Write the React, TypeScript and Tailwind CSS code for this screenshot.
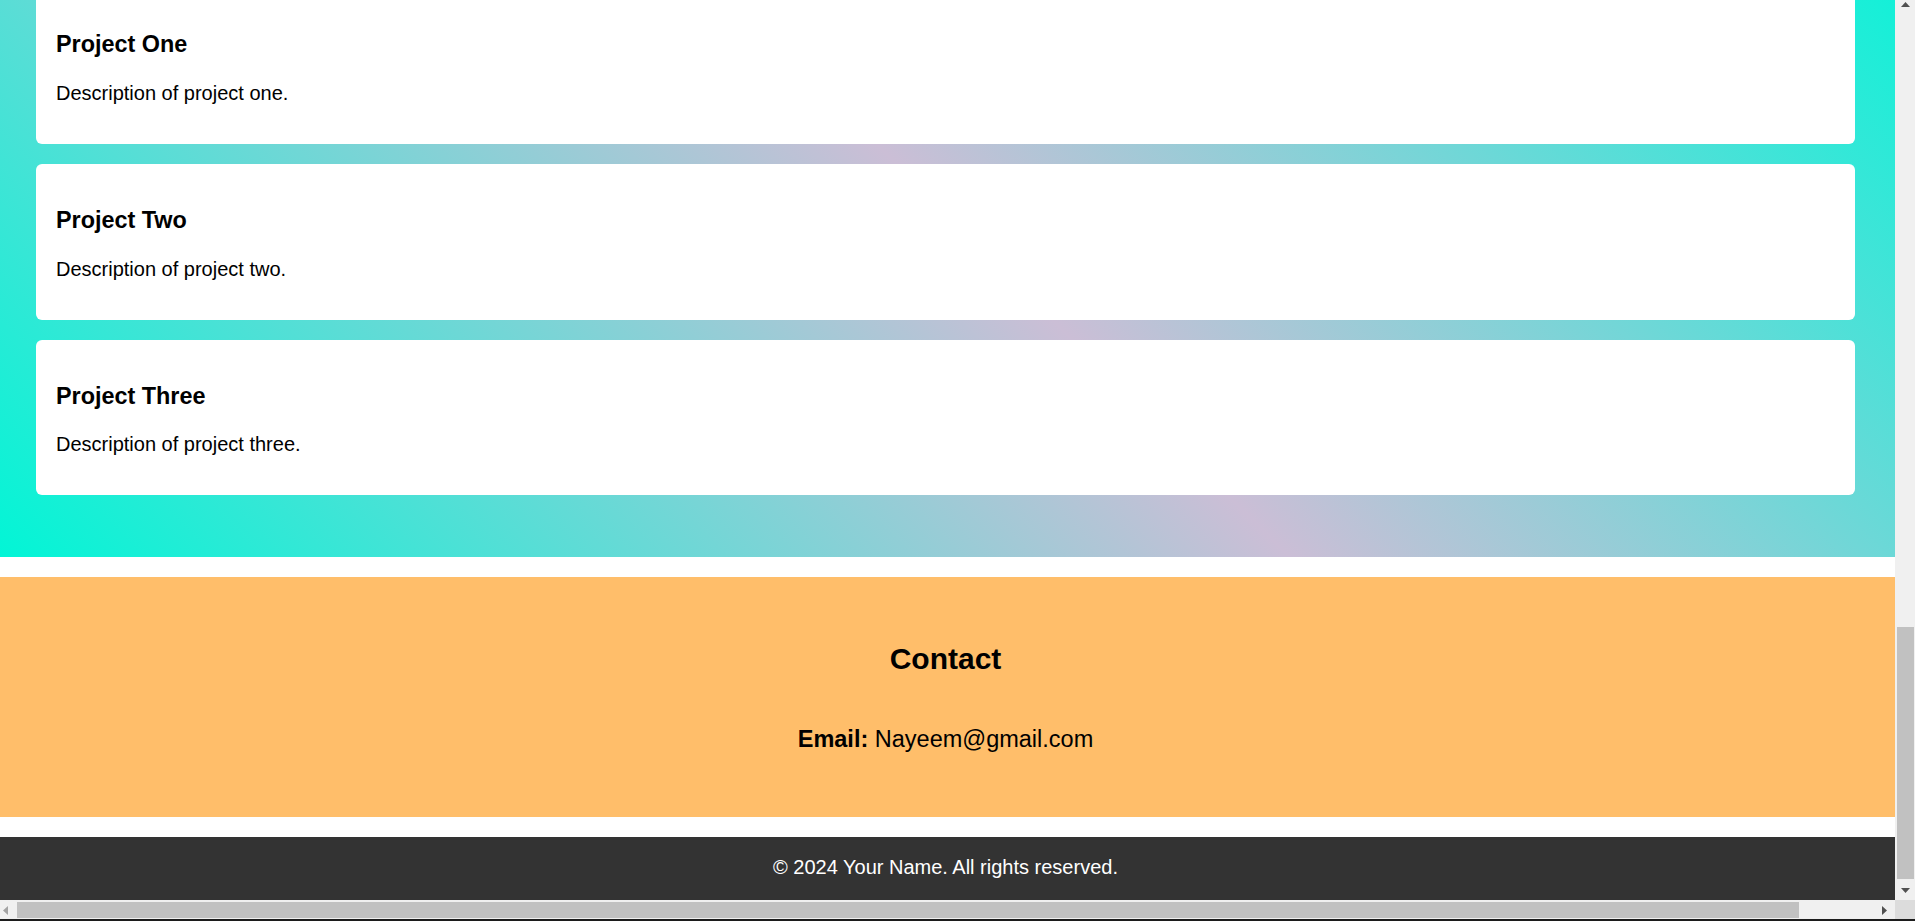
import React from "react";

const projects = [
  { title: "Project One", text: "Description of project one." },
  { title: "Project Two", text: "Description of project two." },
  { title: "Project Three", text: "Description of project three." },
];

function ProjectCard({ title, text }: { title: string; text: string }) {
  return (
    <div className="rounded-[6px] bg-white px-[20px] pt-[20px] pb-[19px]">
      <h3 className="mt-[23.4px] text-[23.4px] leading-[27px] font-bold">{title}</h3>
      <p className="mt-[23.4px] mb-[20px] text-[20px] leading-[23px]">{text}</p>
    </div>
  );
}

function Arrow({ dir, color }: { dir: "up" | "down" | "left" | "right"; color: string }) {
  const points = {
    up: "0,5 4.5,0 9,5",
    down: "0,0 9,0 4.5,5",
    left: "5,0 5,9 0,4.5",
    right: "0,0 5,4.5 0,9",
  }[dir];
  const vertical = dir === "up" || dir === "down";
  return (
    <svg width={vertical ? 9 : 5} height={vertical ? 5 : 9} viewBox={vertical ? "0 0 9 5" : "0 0 5 9"}>
      <polygon points={points} fill={color} />
    </svg>
  );
}

function VerticalScrollbar() {
  return (
    <div className="flex w-[20px] shrink-0 flex-col bg-[#f0f0f0]">
      <div className="flex h-[17px] justify-center pt-[2px]">
        <Arrow dir="up" color="#505050" />
      </div>
      <div className="flex-1" />
      <div className="ml-[2px] h-[252px] w-[17px] bg-[#c1c1c1]" />
      <div className="flex h-[21px] justify-center pt-[9px]">
        <Arrow dir="down" color="#505050" />
      </div>
    </div>
  );
}

function HorizontalScrollbar() {
  return (
    <div className="flex h-[21px] shrink-0 border-b-[2px] border-[#1c1c1c]">
      <div className="flex flex-1 bg-[#f0f0f0] pt-[2px] pb-[1px]">
        <div className="flex w-[17px] items-center pl-[3px]">
          <Arrow dir="left" color="#a3a3a3" />
        </div>
        <div className="w-[1782px] bg-[#c1c1c1]" />
        <div className="flex-1" />
        <div className="flex w-[17px] items-center pl-[4px]">
          <Arrow dir="right" color="#505050" />
        </div>
      </div>
      <div className="w-[20px] bg-[#dcdcdc]" />
    </div>
  );
}

export default function App() {
  return (
    <div className="flex h-[921px] w-[1915px] flex-col overflow-hidden bg-white font-['Liberation_Sans',Arial,sans-serif] text-black">
      <div className="flex min-h-0 flex-1">
        <main className="flex min-w-0 flex-1 flex-col">
          <section className="h-[557px] shrink-0 overflow-hidden bg-[linear-gradient(45deg,#02f5d6_0%,#cbbed6_52.6%,#14f0d8_100%)]">
            <div className="-mt-[12px] flex flex-col gap-[20px] pl-[36px] pr-[40px]">
              {projects.map((p) => (
                <ProjectCard key={p.title} title={p.title} text={p.text} />
              ))}
            </div>
          </section>

          <section className="mt-[20px] flex h-[240px] shrink-0 flex-col items-center bg-[#ffbe6a] pt-[40px] pr-[4px]">
            <h2 className="mt-[25px] text-[30px] leading-[34.5px] font-bold">Contact</h2>
            <p className="mt-[49px] text-[23.5px] leading-[27px]">
              <strong>Email:</strong> Nayeem@gmail.com
            </p>
          </section>

          <footer className="mt-[20px] flex flex-1 items-center justify-center bg-[#333333] pr-[4px] pb-[4px] text-[20px] text-white">
            <p>© 2024 Your Name. All rights reserved.</p>
          </footer>
        </main>
        <VerticalScrollbar />
      </div>
      <HorizontalScrollbar />
    </div>
  );
}
